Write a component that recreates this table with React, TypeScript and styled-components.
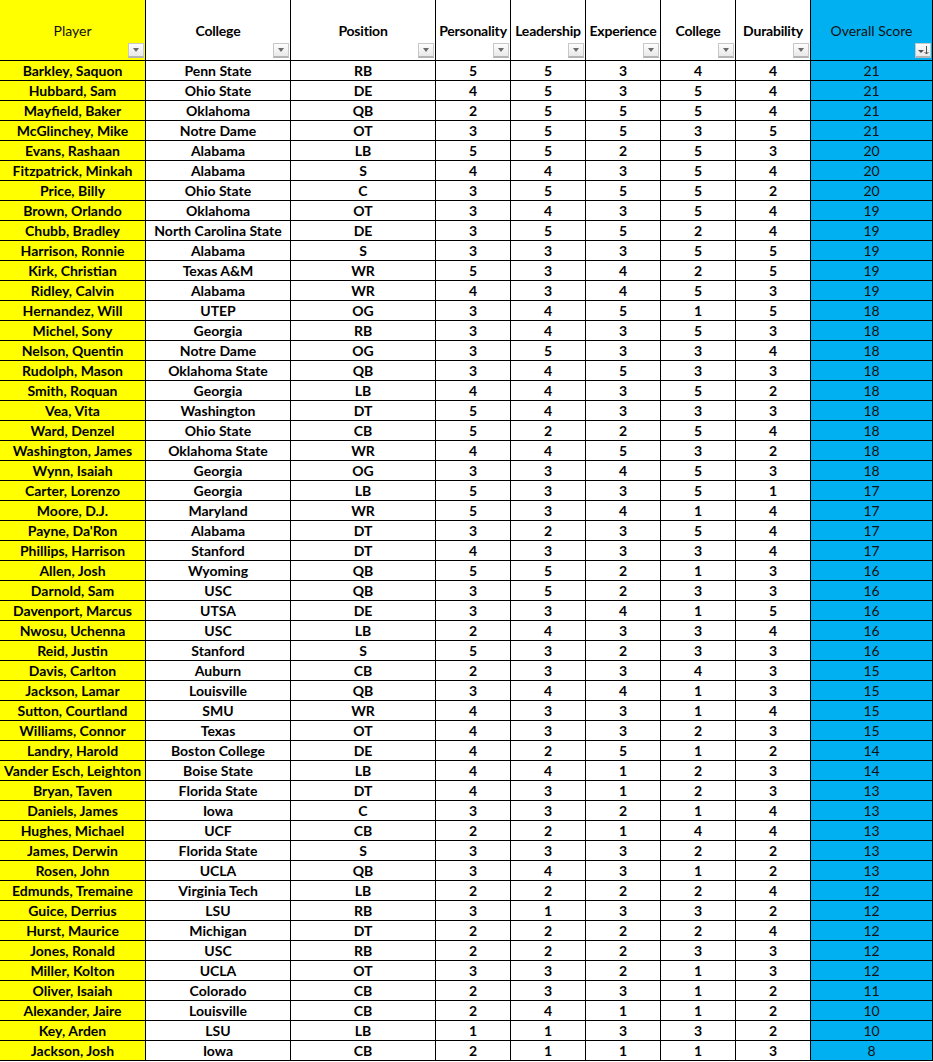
import styled, { createGlobalStyle } from "styled-components";

type Player = {
  name: string;
  college: string;
  pos: string;
  scores: number[];
};

const raw: [string, string, string, string][] = [
  ["Barkley, Saquon", "Penn State", "RB", "55344"],
  ["Hubbard, Sam", "Ohio State", "DE", "45354"],
  ["Mayfield, Baker", "Oklahoma", "QB", "25554"],
  ["McGlinchey, Mike", "Notre Dame", "OT", "35535"],
  ["Evans, Rashaan", "Alabama", "LB", "55253"],
  ["Fitzpatrick, Minkah", "Alabama", "S", "44354"],
  ["Price, Billy", "Ohio State", "C", "35552"],
  ["Brown, Orlando", "Oklahoma", "OT", "34354"],
  ["Chubb, Bradley", "North Carolina State", "DE", "35524"],
  ["Harrison, Ronnie", "Alabama", "S", "33355"],
  ["Kirk, Christian", "Texas A&M", "WR", "53425"],
  ["Ridley, Calvin", "Alabama", "WR", "43453"],
  ["Hernandez, Will", "UTEP", "OG", "34515"],
  ["Michel, Sony", "Georgia", "RB", "34353"],
  ["Nelson, Quentin", "Notre Dame", "OG", "35334"],
  ["Rudolph, Mason", "Oklahoma State", "QB", "34533"],
  ["Smith, Roquan", "Georgia", "LB", "44352"],
  ["Vea, Vita", "Washington", "DT", "54333"],
  ["Ward, Denzel", "Ohio State", "CB", "52254"],
  ["Washington, James", "Oklahoma State", "WR", "44532"],
  ["Wynn, Isaiah", "Georgia", "OG", "33453"],
  ["Carter, Lorenzo", "Georgia", "LB", "53351"],
  ["Moore, D.J.", "Maryland", "WR", "53414"],
  ["Payne, Da'Ron", "Alabama", "DT", "32354"],
  ["Phillips, Harrison", "Stanford", "DT", "43334"],
  ["Allen, Josh", "Wyoming", "QB", "55213"],
  ["Darnold, Sam", "USC", "QB", "35233"],
  ["Davenport, Marcus", "UTSA", "DE", "33415"],
  ["Nwosu, Uchenna", "USC", "LB", "24334"],
  ["Reid, Justin", "Stanford", "S", "53233"],
  ["Davis, Carlton", "Auburn", "CB", "23343"],
  ["Jackson, Lamar", "Louisville", "QB", "34413"],
  ["Sutton, Courtland", "SMU", "WR", "43314"],
  ["Williams, Connor", "Texas", "OT", "43323"],
  ["Landry, Harold", "Boston College", "DE", "42512"],
  ["Vander Esch, Leighton", "Boise State", "LB", "44123"],
  ["Bryan, Taven", "Florida State", "DT", "43123"],
  ["Daniels, James", "Iowa", "C", "33214"],
  ["Hughes, Michael", "UCF", "CB", "22144"],
  ["James, Derwin", "Florida State", "S", "33322"],
  ["Rosen, John", "UCLA", "QB", "34312"],
  ["Edmunds, Tremaine", "Virginia Tech", "LB", "22224"],
  ["Guice, Derrius", "LSU", "RB", "31332"],
  ["Hurst, Maurice", "Michigan", "DT", "22224"],
  ["Jones, Ronald", "USC", "RB", "22233"],
  ["Miller, Kolton", "UCLA", "OT", "33213"],
  ["Oliver, Isaiah", "Colorado", "CB", "23312"],
  ["Alexander, Jaire", "Louisville", "CB", "24112"],
  ["Key, Arden", "LSU", "LB", "11332"],
  ["Jackson, Josh", "Iowa", "CB", "21113"],
];

const players: Player[] = raw.map(([name, college, pos, s]) => ({
  name,
  college,
  pos,
  scores: s.split("").map(Number),
}));

const headers = [
  "College",
  "Position",
  "Personality",
  "Leadership",
  "Experience",
  "College",
  "Durability",
];

const GlobalStyle = createGlobalStyle`
  html, body {
    margin: 0;
    padding: 0;
    background: #ffffff;
  }
  body {
    font-family: Lato, "Liberation Sans", Arial, sans-serif;
    font-size: 14px;
    color: #000000;
  }
`;

const Sheet = styled.div`
  display: grid;
  grid-template-columns: 146px 145px 145px 75px 75px 75px 75px 75px 122px;
  grid-template-rows: 61px;
  grid-auto-rows: 20px;
  width: 933px;
`;

const Cell = styled.div<{ $bg?: string; $bold?: boolean }>`
  box-sizing: border-box;
  border-right: 1px solid #000;
  border-bottom: 1px solid #000;
  background: ${(p) => p.$bg || "#ffffff"};
  font-weight: ${(p) => (p.$bold ? 700 : 400)};
  color: ${(p) => (p.$bold ? "#000000" : "#111111")};
  display: flex;
  align-items: center;
  justify-content: center;
  white-space: nowrap;
  overflow: hidden;
  line-height: 19px;
`;

const HeadCell = styled(Cell)`
  position: relative;
  padding-top: 1px;
  letter-spacing: ${(p) => (p.$bold ? "-0.2px" : "0")};
`;

const FilterButton = styled.div`
  position: absolute;
  right: 1px;
  bottom: 2px;
  width: 16px;
  height: 15px;
  box-sizing: border-box;
  border: 1px solid #c8c8c8;
  border-bottom: 2px solid #b4b4b4;
  background: linear-gradient(#fdfdfd, #e9e9e9);
  display: flex;
  align-items: center;
  justify-content: center;
`;

const Arrow = styled.span`
  width: 0;
  height: 0;
  border-left: 3.5px solid transparent;
  border-right: 3.5px solid transparent;
  border-top: 4px solid #6a6a6a;
`;

const SortIcon = () => (
  <svg width="12" height="10" viewBox="0 0 12 10">
    <path d="M1 5h6l-3 3z" fill="#505050" />
    <path d="M9.5 1v8M7.5 7l2 2 2-2" stroke="#505050" strokeWidth="1" fill="none" />
  </svg>
);

const YELLOW = "#ffff00";
const BLUE = "#00b0f0";

export default function App() {
  return (
    <>
      <GlobalStyle />
      <Sheet>
        <HeadCell $bg={YELLOW}>
          Player
          <FilterButton>
            <Arrow />
          </FilterButton>
        </HeadCell>
        {headers.map((h, i) => (
          <HeadCell key={i} $bold>
            {h}
            <FilterButton>
              <Arrow />
            </FilterButton>
          </HeadCell>
        ))}
        <HeadCell $bg={BLUE}>
          Overall Score
          <FilterButton>
            <SortIcon />
          </FilterButton>
        </HeadCell>

        {players.map((p) => (
          <Row key={p.name} player={p} />
        ))}
      </Sheet>
    </>
  );
}

const Row = ({ player }: { player: Player }) => {
  const total = player.scores.reduce((a, b) => a + b, 0);
  return (
    <>
      <Cell $bg={YELLOW} $bold>
        {player.name}
      </Cell>
      <Cell $bold>{player.college}</Cell>
      <Cell $bold>{player.pos}</Cell>
      {player.scores.map((s, i) => (
        <Cell key={i} $bold>
          {s}
        </Cell>
      ))}
      <Cell $bg={BLUE}>{total}</Cell>
    </>
  );
};
